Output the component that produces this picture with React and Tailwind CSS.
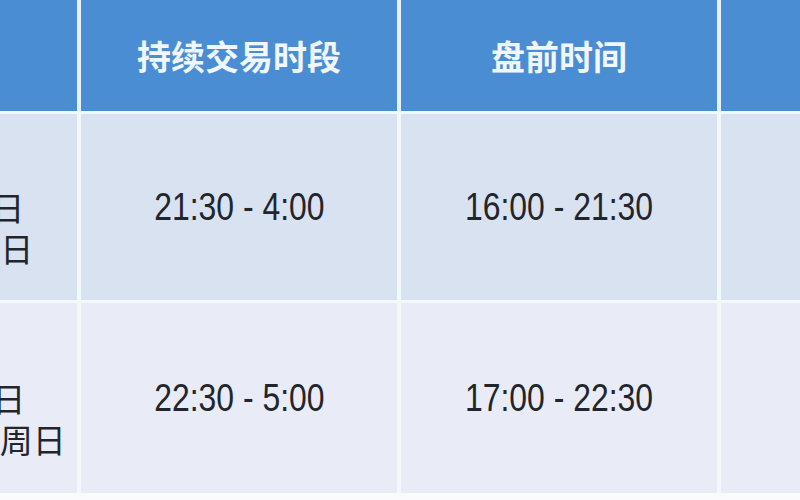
import React from 'react';

const headers = ['交易时段', '持续交易时段', '盘前时间', '盘后时间'];

const rows = [
  {
    bg: 'bg-[#d8e2f0]',
    h: 'h-[186px]',
    labelW: 'w-[322px]',
    label: ['夏令时', '3月第二个周日', '11月第一个周日'],
    cells: ['21:30 - 4:00', '16:00 - 21:30', '4:00 - 8:00'],
  },
  {
    bg: 'bg-[#e9ecf6]',
    h: 'h-[190px]',
    labelW: 'w-[338px]',
    label: ['冬令时', '11月第一个周日', '至次年3月第二个周日'],
    cells: ['22:30 - 5:00', '17:00 - 22:30', '5:00 - 9:00'],
  },
];

const cjk = "font-['Noto_Sans_CJK_SC',sans-serif]";
const num = "font-['Liberation_Sans',sans-serif]";

export default function App() {
  return (
    <div className="w-[800px] h-[500px] overflow-hidden bg-[#fafbfd]">
      <div className="flex flex-col gap-[3px] bg-[#f3f8fc] w-[1041px]">
        {/* header */}
        <div className="flex gap-[4px] h-[111px] bg-[#e6f4fa]">
          <div className="w-[77px] shrink-0 bg-[#4b8dd3]" />
          {headers.slice(1).map((t) => (
            <div
              key={t}
              className={`w-[316px] shrink-0 bg-[#4b8dd3] flex items-center justify-center text-[34px] font-bold text-[#f0f7ff] ${cjk}`}
            >
              {t}
            </div>
          ))}
        </div>

        {rows.map((r, i) => (
          <div key={i} className={`flex gap-[4px] ${r.h}`}>
            <div className={`w-[77px] shrink-0 ${r.bg} overflow-hidden flex justify-end items-center`}>
              <div className={`${r.labelW} shrink-0 text-center text-[33px] leading-[41px] text-[#22252b] ${cjk}`}>
                {r.label.map((l) => (
                  <div key={l}>{l}</div>
                ))}
              </div>
            </div>
            {r.cells.map((c) => (
              <div
                key={c}
                className={`w-[316px] shrink-0 ${r.bg} flex items-center justify-center text-[38px] text-[#22252b] ${num}`}
              >
                <span className="inline-block scale-x-[0.84] whitespace-nowrap">{c}</span>
              </div>
            ))}
          </div>
        ))}
      </div>
    </div>
  );
}
